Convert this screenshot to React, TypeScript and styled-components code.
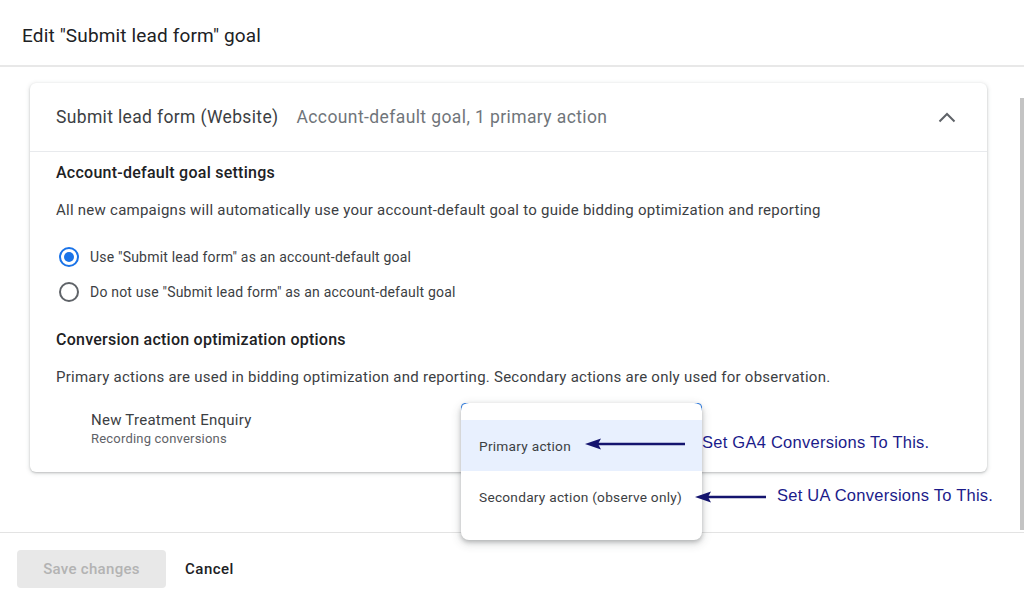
import React from "react";
import styled, { createGlobalStyle } from "styled-components";

const Global = createGlobalStyle`
  html, body { margin: 0; padding: 0; background: #fff; }
  body { font-family: Roboto, "Noto Sans", Arial, sans-serif; color: #3c4043; }
  * { box-sizing: border-box; }
`;

const Page = styled.div`
  width: 1024px;
  height: 598px;
  display: flex;
  flex-direction: column;
  overflow: hidden;
  background: #fff;
`;

const Header = styled.header`
  height: 67px;
  flex: none;
  display: flex;
  align-items: center;
  padding: 5px 22px 0;
  border-bottom: 2px solid #e8e8e8;
`;

const Title = styled.h1`
  margin: 0;
  font-family: Roboto, Arial, sans-serif;
  font-weight: 400;
  font-size: 19px;
  letter-spacing: 0.15px;
  color: #202124;
`;

const Body = styled.main`
  flex: 1;
  display: flex;
  min-height: 0;
`;

const Content = styled.div`
  flex: 1;
  padding: 16px 30px 0;
`;

const ScrollTrack = styled.div`
  width: 7px;
  flex: none;
  padding: 31px 0 2px 3px;
  display: flex;
`;

const ScrollThumb = styled.div`
  width: 4px;
  flex: 1;
  background: #c4c4c4;
`;

const Card = styled.section`
  background: #fff;
  border-radius: 6px;
  box-shadow: 0 1px 2px rgba(60, 64, 67, 0.25), 0 1px 4px 1px rgba(60, 64, 67, 0.12);
`;

const CardHeader = styled.div`
  height: 69px;
  display: flex;
  align-items: center;
  padding: 0 31px 0 26px;
  border-bottom: 1px solid #e8eaed;
`;

const GoalName = styled.span`
  font-size: 17.5px;
  letter-spacing: 0.35px;
  color: #3c4043;
  margin-right: 18px;
`;

const GoalMeta = styled.span`
  flex: 1;
  font-size: 17.5px;
  letter-spacing: 0.4px;
  color: #70757a;
`;

const CardBody = styled.div`
  padding: 11px 26px 25px;
`;

const SectionTitle = styled.h2<{ $mt: number }>`
  margin: ${(p) => p.$mt}px 0 0;
  font-size: 16px;
  line-height: 20px;
  font-weight: 500;
  letter-spacing: 0.25px;
  color: #202124;
`;

const Desc = styled.p`
  margin: 17px 0 0;
  font-size: 15px;
  line-height: 20px;
  letter-spacing: 0.25px;
  color: #3c4043;
`;

const RadioGroup = styled.div`
  margin-top: 19px;
  display: flex;
  flex-direction: column;
`;

const RadioRow = styled.label`
  height: 35px;
  display: flex;
  align-items: center;
  gap: 11px;
  padding-left: 3px;
  font-size: 14px;
  letter-spacing: 0.2px;
  color: #3c4043;
`;

const RadioCircle = styled.span<{ $checked?: boolean }>`
  width: 20px;
  height: 20px;
  border-radius: 50%;
  border: 2px solid ${(p) => (p.$checked ? "#1a73e8" : "#5f6368")};
  display: flex;
  align-items: center;
  justify-content: center;
  &::after {
    content: "";
    width: 10px;
    height: 10px;
    border-radius: 50%;
    background: ${(p) => (p.$checked ? "#1a73e8" : "transparent")};
  }
`;

const ActionRow = styled.div`
  position: relative;
  margin-top: 23px;
  padding-left: 35px;
`;

const ActionName = styled.div`
  font-size: 15px;
  line-height: 20px;
  letter-spacing: 0.25px;
  color: #3c4043;
`;

const ActionSub = styled.div`
  font-size: 13px;
  line-height: 16px;
  letter-spacing: 0.2px;
  color: #5f6368;
  margin-top: 1px;
`;

const SelectOutline = styled.div`
  position: absolute;
  left: 405px;
  top: -7px;
  width: 241px;
  height: 40px;
  border: 1.5px solid #1a73e8;
  border-radius: 4px;
  z-index: 5;
`;

const Menu = styled.div`
  position: absolute;
  left: 405px;
  top: -7px;
  width: 241px;
  padding: 17px 0;
  background: #fff;
  border-radius: 8px;
  box-shadow: 0 2px 4px rgba(60, 64, 67, 0.3), 0 3px 8px 2px rgba(60, 64, 67, 0.15);
  z-index: 6;
`;

const MenuItem = styled.div<{ $active?: boolean; $h: number }>`
  position: relative;
  height: ${(p) => p.$h}px;
  display: flex;
  align-items: center;
  padding-left: 18px;
  font-size: 13.7px;
  letter-spacing: 0.25px;
  color: #3c4043;
  background: ${(p) => (p.$active ? "#e8f0fe" : "transparent")};
`;

const Annotation = styled.div<{ $left: number; $gap: number; $dy: number }>`
  position: absolute;
  left: ${(p) => p.$left}px;
  top: 50%;
  transform: translateY(calc(-50% + ${(p) => p.$dy}px));
  display: flex;
  align-items: center;
  gap: ${(p) => p.$gap}px;
  white-space: nowrap;
`;

const AnnotationText = styled.span`
  font-family: "Liberation Sans", Arial, sans-serif;
  font-size: 16.5px;
  color: #1b1b8a;
  margin-top: -3px;
`;

const Footer = styled.footer`
  height: 66px;
  flex: none;
  border-top: 1px solid #e3e3e3;
  display: flex;
  align-items: flex-start;
  gap: 19px;
  padding: 17px 17px 0;
  position: relative;
  z-index: 1;
`;

const SaveButton = styled.button`
  width: 149px;
  height: 38px;
  border: none;
  border-radius: 4px;
  background: #e8e8e8;
  color: #b3b3b3;
  font-family: Roboto, Arial, sans-serif;
  font-size: 15px;
  font-weight: 500;
  letter-spacing: 0.3px;
  padding: 0;
`;

const CancelButton = styled.button`
  height: 38px;
  border: none;
  background: none;
  color: #202124;
  font-family: Roboto, Arial, sans-serif;
  font-size: 15px;
  font-weight: 500;
  letter-spacing: 0.5px;
  padding: 0;
`;

const Arrow = ({ width }: { width: number }) => (
  <svg width={width} height="12" viewBox={`0 0 ${width} 12`}>
    <line x1="12" y1="6" x2={width} y2="6" stroke="#14146e" strokeWidth="2.5" />
    <polygon points="0,6 16,0.5 13,6 16,11.5" fill="#14146e" />
  </svg>
);

const Chevron = () => (
  <svg width="18" height="11" viewBox="0 0 18 11">
    <polyline points="1.5,9.5 9,2 16.5,9.5" fill="none" stroke="#5f6368" strokeWidth="2" />
  </svg>
);

export default function App() {
  return (
    <Page>
      <Global />
      <Header>
        <Title>Edit "Submit lead form" goal</Title>
      </Header>
      <Body>
        <Content>
          <Card>
            <CardHeader>
              <GoalName>Submit lead form (Website)</GoalName>
              <GoalMeta>Account-default goal, 1 primary action</GoalMeta>
              <Chevron />
            </CardHeader>
            <CardBody>
              <SectionTitle $mt={0}>Account-default goal settings</SectionTitle>
              <Desc>
                All new campaigns will automatically use your account-default goal to guide bidding
                optimization and reporting
              </Desc>
              <RadioGroup>
                <RadioRow>
                  <RadioCircle $checked />
                  Use "Submit lead form" as an account-default goal
                </RadioRow>
                <RadioRow>
                  <RadioCircle />
                  Do not use "Submit lead form" as an account-default goal
                </RadioRow>
              </RadioGroup>
              <SectionTitle $mt={21}>Conversion action optimization options</SectionTitle>
              <Desc>
                Primary actions are used in bidding optimization and reporting. Secondary actions
                are only used for observation.
              </Desc>
              <ActionRow>
                <ActionName>New Treatment Enquiry</ActionName>
                <ActionSub>Recording conversions</ActionSub>
                <SelectOutline />
                <Menu>
                  <MenuItem $active $h={51}>
                    Primary action
                    <Annotation $left={124} $gap={17} $dy={-2}>
                      <Arrow width={100} />
                      <AnnotationText>Set GA4 Conversions To This.</AnnotationText>
                    </Annotation>
                  </MenuItem>
                  <MenuItem $h={52}>
                    Secondary action (observe only)
                    <Annotation $left={234} $gap={11} $dy={0}>
                      <Arrow width={71} />
                      <AnnotationText>Set UA Conversions To This.</AnnotationText>
                    </Annotation>
                  </MenuItem>
                </Menu>
              </ActionRow>
            </CardBody>
          </Card>
        </Content>
        <ScrollTrack>
          <ScrollThumb />
        </ScrollTrack>
      </Body>
      <Footer>
        <SaveButton>Save changes</SaveButton>
        <CancelButton>Cancel</CancelButton>
      </Footer>
    </Page>
  );
}
